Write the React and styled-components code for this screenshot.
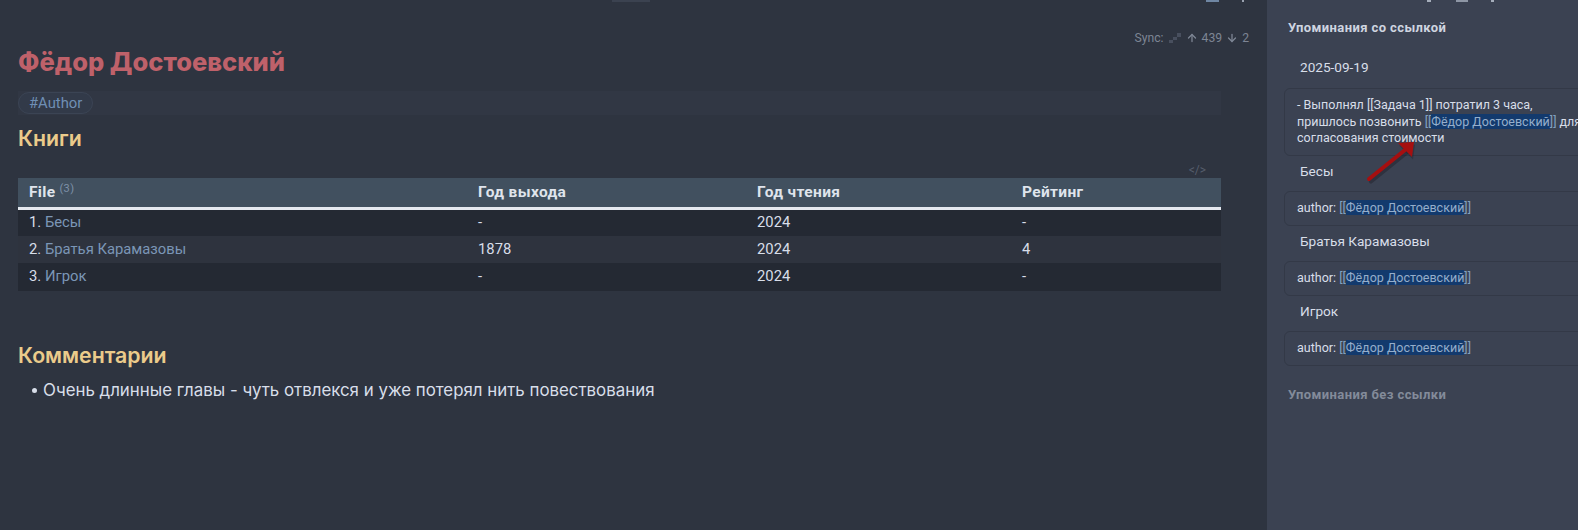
import React from "react";
import styled, { createGlobalStyle } from "styled-components";
import { ArrowUp, ArrowDown } from "lucide-react";

const GlobalStyle = createGlobalStyle`
  html, body {
    margin: 0;
    padding: 0;
    height: 100%;
    background: #2e3440;
    overflow: hidden;
  }
  #root {
    height: 100%;
  }
`;

const Page = styled.div`
  display: flex;
  width: 1578px;
  height: 530px;
  overflow: hidden;
  position: relative;
  font-family: Roboto, sans-serif;
`;

const Main = styled.main`
  width: 1267px;
  flex: none;
  display: flex;
  flex-direction: column;
  background: #2e3440;
`;

/* the window title bar is cut off by the crop, only its lower edge shows */
const TopStrip = styled.div`
  height: 3px;
  display: flex;
  align-items: flex-start;
  overflow: hidden;
`;

const TopMark = styled.span`
  display: block;
  flex: none;
  width: ${(p) => p.$w}px;
  height: 2px;
  margin-left: ${(p) => p.$gap}px;
  background: ${(p) => p.$color};
`;

const SyncRow = styled.div`
  display: flex;
  justify-content: flex-end;
  align-items: center;
  gap: 4px;
  height: 16px;
  margin-top: 27px;
  padding-right: 18px;
  font-size: 12.2px;
  color: #7d8594;
`;

const Content = styled.div`
  width: 1203px;
  margin-left: 18px;
  display: flex;
  flex-direction: column;
`;

const Title = styled.h1`
  margin: 0;
  font-family: Inter, sans-serif;
  font-size: 25.5px;
  line-height: 32px;
  font-weight: 800;
  color: #bf616a;
`;

const TagRow = styled.div`
  margin-top: 13px;
  height: 24px;
  display: flex;
  align-items: center;
  background: #313744;
`;

const Tag = styled.span`
  height: 22px;
  box-sizing: border-box;
  padding: 0 10px;
  display: flex;
  align-items: center;
  border: 1px solid #3b4454;
  border-radius: 11px;
  background: #323a49;
  font-size: 14.8px;
  color: #6f8fb5;
`;

const SectionTitle = styled.h2`
  margin: ${(p) => p.$top}px 0 0;
  font-family: Inter, sans-serif;
  font-size: 21.3px;
  line-height: 28px;
  font-weight: 600;
  color: #ebcb8b;
`;

const CodeMark = styled.div`
  margin-top: 10px;
  height: 16px;
  padding-right: 15px;
  text-align: right;
  font-size: 12px;
  line-height: 16px;
  color: #565e6d;
`;

const Table = styled.div`
  display: flex;
  flex-direction: column;
  font-size: 14.8px;
  color: #d8dee9;
`;

const Row = styled.div`
  display: grid;
  box-sizing: border-box;
  grid-template-columns: 449px 279px 265px 1fr;
  align-items: center;
  height: ${(p) => p.$h}px;
  padding: 0 0 2px 11px;
  background: ${(p) => p.$bg};
`;

const HeadRow = styled(Row)`
  border-bottom: 3px solid #e5e9f0;
  font-size: 15.5px;
  font-weight: 700;
  letter-spacing: 0.35px;
  color: #dfe4ec;
`;

const Count = styled.sup`
  font-size: 11px;
  font-weight: 400;
  color: #7e90a8;
  margin-left: 4px;
  line-height: 0;
  vertical-align: 5px;
`;

const FileLink = styled.span`
  color: #7b96b6;
`;

const Bullets = styled.ul`
  list-style: none;
  margin: 9px 0 0;
  padding: 0 0 0 14px;
`;

const Bullet = styled.li`
  display: flex;
  align-items: center;
  gap: 6px;
  font-family: Inter, sans-serif;
  font-size: 16.87px;
  line-height: 24px;
  color: #d8dee9;
  white-space: nowrap;
  &::before {
    content: "";
    width: 5px;
    height: 5px;
    border-radius: 50%;
    background: #d8dee9;
  }
`;

const Side = styled.aside`
  flex: 1;
  min-width: 0;
  background: #3b4252;
  padding: 0 0 0 21px;
  display: flex;
  flex-direction: column;
`;

const SideHead = styled.div`
  font-size: 13px;
  line-height: 16px;
  font-weight: 700;
  letter-spacing: 0.4px;
  white-space: nowrap;
  color: ${(p) => (p.$dim ? "#838b9a" : "#cfd5e0")};
  margin-top: ${(p) => p.$top}px;
`;

const FileName = styled.div`
  font-size: 13.6px;
  line-height: 18px;
  color: #d8dee9;
  padding-left: 12px;
  margin-top: ${(p) => p.$top}px;
`;

const Card = styled.div`
  box-sizing: border-box;
  width: 330px;
  margin-top: ${(p) => p.$top}px;
  margin-left: -4px;
  padding: 8px 12px;
  border: 1px solid #333947;
  border-radius: 6px;
  background: #3b4252;
  font-size: 12.5px;
  line-height: 16.5px;
  white-space: nowrap;
  color: #d8dee9;
`;

const LinkMark = styled.span`
  color: #95aecb;
  background: #133a6d;
`;

const Bracket = styled.span`
  color: #81a1c1;
`;

const ArrowWrap = styled.svg`
  position: absolute;
  left: 1364px;
  top: 136px;
  width: 56px;
  height: 48px;
`;

const SyncGlyph = styled.svg`
  width: 12px;
  height: 12px;
  margin: 0 1px;
`;

const Note = styled.span`
  white-space: nowrap;
`;

const WikiLink = () => (
  <Note>
    <Bracket>[[</Bracket>
    <LinkMark>Фёдор Достоевский</LinkMark>
    <Bracket>]]</Bracket>
  </Note>
);

const rows = [
  { id: 1, name: "Бесы", year: "-", read: "2024", rating: "-", bg: "#242933", h: 26 },
  { id: 2, name: "Братья Карамазовы", year: "1878", read: "2024", rating: "4", bg: "#2e333e", h: 27 },
  { id: 3, name: "Игрок", year: "-", read: "2024", rating: "-", bg: "#242933", h: 28 },
];

const mentions = ["Бесы", "Братья Карамазовы", "Игрок"];

export default function App() {
  return (
    <Page>
      <GlobalStyle />
      <Main>
        <TopStrip>
          <TopMark $w={38} $gap={612} $color="#3b4250" />
          <TopMark $w={13} $gap={556} $color="#6f86a3" />
          <TopMark $w={2} $gap={23} $color="#9aa2b0" />
        </TopStrip>
        <SyncRow>
          Sync:
          <SyncGlyph viewBox="0 0 12 12" fill="#484f5e">
            <path d="M0 8h4v3H0zM4 5h4v3H4zM8 1h4v4H8z" />
          </SyncGlyph>
          <ArrowUp size={12} strokeWidth={2.6} />
          439
          <ArrowDown size={12} strokeWidth={2.6} />2
        </SyncRow>
        <Content>
          <Title>Фёдор Достоевский</Title>
          <TagRow>
            <Tag>#Author</Tag>
          </TagRow>
          <SectionTitle $top={9}>Книги</SectionTitle>
          <CodeMark>&lt;/&gt;</CodeMark>
          <Table>
            <HeadRow $h={32} $bg="#41505f">
              <span>
                File<Count>(3)</Count>
              </span>
              <span>Год выхода</span>
              <span>Год чтения</span>
              <span>Рейтинг</span>
            </HeadRow>
            {rows.map((r) => (
              <Row key={r.id} $h={r.h} $bg={r.bg}>
                <span>
                  {r.id}. <FileLink>{r.name}</FileLink>
                </span>
                <span>{r.year}</span>
                <span>{r.read}</span>
                <span>{r.rating}</span>
              </Row>
            ))}
          </Table>
          <SectionTitle $top={50}>Комментарии</SectionTitle>
          <Bullets>
            <Bullet>Очень длинные главы - чуть отвлекся и уже потерял нить повествования</Bullet>
          </Bullets>
        </Content>
      </Main>
      <Side>
        <TopStrip>
          <TopMark $w={4} $gap={139} $color="#a5adba" />
          <TopMark $w={12} $gap={25} $color="#8e96a5" />
          <TopMark $w={3} $gap={23} $color="#a5adba" />
        </TopStrip>
        <SideHead $top={17}>Упоминания со ссылкой</SideHead>
        <FileName $top={22}>2025-09-19</FileName>
        <Card $top={12}>
          - Выполнял [[Задача 1]] потратил 3 часа,
          <br />
          пришлось позвонить <WikiLink /> для
          <br />
          согласования стоимости
        </Card>
        {mentions.map((name) => (
          <React.Fragment key={name}>
            <FileName $top={6}>{name}</FileName>
            <Card $top={11.5}>
              author: <WikiLink />
            </Card>
          </React.Fragment>
        ))}
        <SideHead $dim $top={21}>
          Упоминания без ссылки
        </SideHead>
      </Side>
      <ArrowWrap viewBox="0 0 56 48">
        <path d="M6 44 L42 15" stroke="#1f1f28" strokeOpacity="0.45" strokeWidth="4" strokeLinecap="round" transform="translate(1 1.5)" />
        <path d="M50 7 L34 8 L48 22 Z" fill="#1f1f28" fillOpacity="0.35" transform="translate(1 1.5)" />
        <path d="M5 43 L41 14" stroke="#a50f10" strokeWidth="4" strokeLinecap="round" />
        <path d="M50 6 L34 7 L48 21 Z" fill="#a50f10" />
      </ArrowWrap>
    </Page>
  );
}
